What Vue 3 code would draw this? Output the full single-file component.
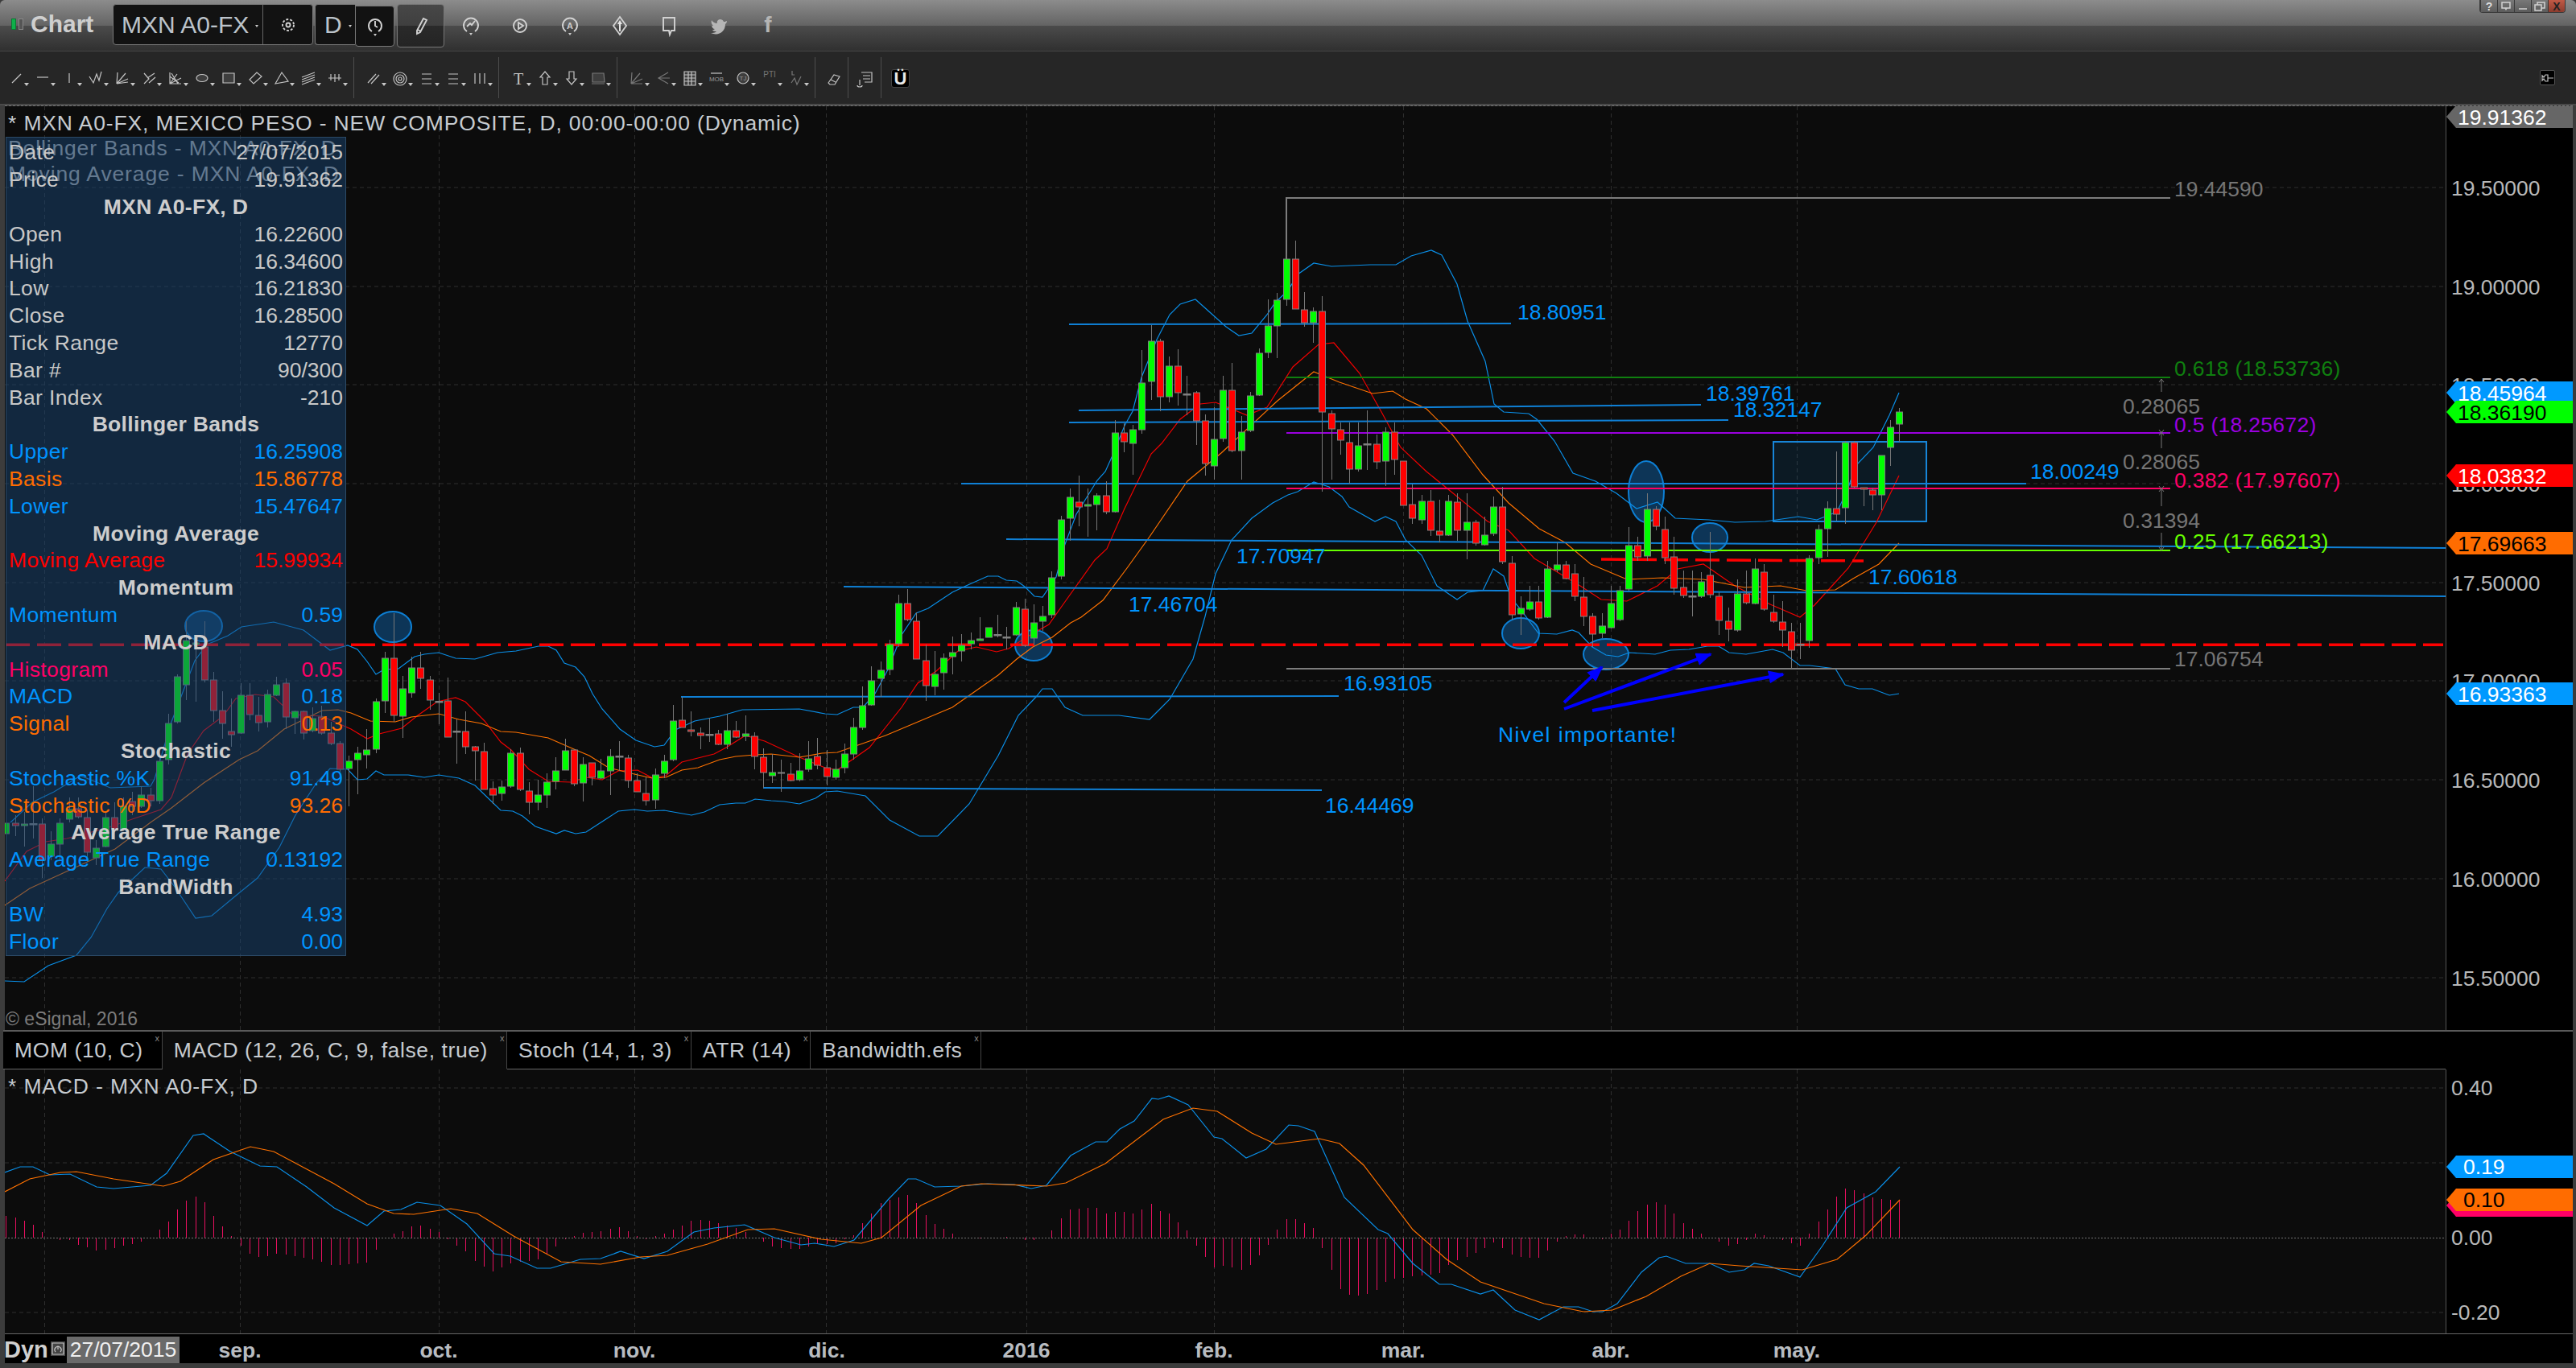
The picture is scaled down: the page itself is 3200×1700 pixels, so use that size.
<template>
  <div class="window">
    <!-- barra de titulo -->
    <div class="titlebar">
      <span class="status"><i class="on"></i><i></i></span>
      <span class="app">Chart</span>
      <div class="symbol">
        <span class="big">MXN A0-FX</span><b class="tri"></b>
        <span class="gearcell">
          <svg width="24" height="24" viewBox="0 0 24 24"><circle cx="12" cy="12" r="7" class="st" stroke-width="3" stroke-dasharray="3 2"/><circle cx="12" cy="12" r="2.5" class="st"/></svg>
        </span>
      </div>
      <div class="period"><span class="big">D</span><b class="tri"></b></div>
      <div class="clockbtn">
        <svg width="24" height="28" viewBox="0 0 24 28"><path d="M8 20A8 8 0 1 1 16 20M12 7V13L15 15" class="st"/><path d="M10 23h4l-2 3z" fill="#ccc"/></svg>
      </div>
      <div class="pencil">
        <svg width="24" height="28" viewBox="0 0 24 28"><path d="M7 20 L15 5 L19 7 L11 22 L7 24 Z M8 19 L12 21" class="st"/></svg>
      </div>
      <div class="topicons">
        <span class="ti"><svg width="26" height="28" viewBox="0 0 26 28"><path d="M8 21A9 9 0 1 1 18 21M8 15 L12 11 L14 13 L18 8" class="st"/><path d="M11 23h4l-2 3z" fill="#ccc"/></svg></span>
        <span class="ti"><svg width="26" height="28" viewBox="0 0 26 28"><circle cx="13" cy="14" r="8" class="st"/><path d="M11 10 L17 14 L11 18 Z" class="st"/></svg></span>
        <span class="ti"><svg width="26" height="28" viewBox="0 0 26 28"><path d="M8 21A9 9 0 1 1 18 21" class="st"/><text x="13" y="18" class="mini">A</text><path d="M11 23h4l-2 3z" fill="#ccc"/></svg></span>
        <span class="ti"><svg width="26" height="28" viewBox="0 0 26 28"><path d="M13 3 L21 14 L13 25 L5 14 Z" class="st"/><path d="M13 7 L16 12 H14 V21 H12 V12 H10 Z" fill="#e6e6e6"/></svg></span>
        <span class="ti"><svg width="26" height="28" viewBox="0 0 26 28"><path d="M6 4 H20 V20 H16 L14 25 L13 20 H6 Z" class="st"/></svg></span>
        <span class="ti"><svg width="26" height="28" viewBox="0 0 26 28"><path d="M23 8 C21 9 20 9 19 9 C18 6 14 5 12 7 C10 9 11 11 11 11 C8 11 5 9 4 7 C3 10 4 12 6 14 C5 14 4 14 4 13 C4 16 6 18 8 18 C7 19 6 19 5 19 C6 21 8 21 10 21 C8 23 5 23 3 23 C12 27 21 22 21 12 C22 11 23 10 23 8 Z" fill="#b5b5b5"/></svg></span>
        <span class="ti fbcell"><svg width="26" height="36" viewBox="0 0 26 36"><text x="13" y="28" class="fb">f</text></svg></span>
      </div>
      <div class="winbtns">
        <span>?</span>
        <span><svg width="14" height="12" viewBox="0 0 14 12"><path d="M2 1H12V8H2Z" class="st2"/><path d="M5 8h4l-2 3z" fill="#ccc"/></svg></span>
        <span><svg width="12" height="12" viewBox="0 0 12 12"><path d="M1 9H11" class="st2"/></svg></span>
        <span><svg width="14" height="12" viewBox="0 0 14 12"><path d="M1 4H9V11H1ZM4 4V1H13V8H9" class="st2"/></svg></span>
        <span class="close">X</span>
      </div>
    </div>

    <!-- barra de desenho -->
    <div class="toolbar">
      <template v-for="(g, gi) in toolGroups" :key="gi">
        <div class="group">
          <svg v-for="(t, i) in g" :key="i" class="tool" width="33" height="30" viewBox="0 0 33 30">
            <path v-if="t.d" :d="t.d" :class="['ts', t.fill ? 'filled' : '', t.dim ? 'dim' : '']"/>
            <text v-if="t.text" x="14" :y="t.ty" :class="t.cl">{{ t.text }}</text>
            <path d="M24 20h6l-3 4z" fill="#c8c8c8"/>
          </svg>
        </div>
        <i class="sep"></i>
      </template>
      <svg class="single eraser" width="26" height="30" viewBox="0 0 26 30"><path d="M5 20 L12 10 L19 12 L13 22 H7 Z M8 16 L14 19" class="ts"/></svg>
      <i class="sep sep-a"></i>
      <svg class="single" width="34" height="30" viewBox="0 0 34 30"><path d="M12 7H25V19H16M14 11H23M14 15H23M10 16V23M7 23a3 2 0 1 0 6 0" class="ts"/></svg>
      <i class="sep sep-b"></i>
      <span class="magnet">Ü</span>
      <span class="pin"><svg width="16" height="12" viewBox="0 0 16 12"><path d="M1 3 L3 5 L5 2 H8 V10 H5 L3 7 L1 9 Z M8 6 H15" class="ts"/></svg></span>
    </div>

    <!-- grafico de precos -->
    <div class="pane">
      <svg class="chart" width="3190" height="1148" viewBox="6 133 3190 1148">
        <rect x="6" y="133" width="3032" height="1148" fill="#0c0c0c"/>
        <rect x="3038" y="133" width="158" height="1148" fill="#000"/>
        <path v-for="y in priceGrid" :key="'h'+y" :d="`M6 ${y}H3038`" class="grid"/>
        <path v-for="x in monthLines" :key="'v'+x" :d="`M${x} 133V1281`" class="grid"/>

        <ellipse v-for="(e, i) in ellipses" :key="'e'+i" :cx="e[0]" :cy="e[1]" :rx="e[2]" :ry="e[3]" fill="rgba(15,105,180,.45)" stroke="#0d7fd4" stroke-width="2"/>
        <rect x="2203" y="550" width="190" height="99" fill="rgba(15,120,200,.13)" stroke="#1785d8" stroke-width="2"/>

        <polyline :points="upper" class="ind" stroke="#0a8fe8"/>
        <polyline :points="lower" class="ind" stroke="#0a8fe8"/>
        <polyline :points="basis" class="ind" stroke="#f00000"/>
        <polyline :points="ema" class="ind" stroke="#ff7200"/>

        <line v-for="(l, i) in trend" :key="'t'+i" :x1="l[0]" :y1="l[1]" :x2="l[2]" :y2="l[3]" stroke="#0f80d6" stroke-width="2"/>
        <line v-for="(l, i) in fib" :key="'f'+i" x1="1598" :y1="l[0]" x2="2696" :y2="l[0]" :stroke="l[1]" stroke-width="2"/>
        <path d="M1598 323V247H2696" fill="none" stroke="#7d7d7d" stroke-width="2"/>
        <path d="M2685 472V488M2685 537V558M2685 607V630M2685 663V685M2682 476l3 -4 3 4M2682 535l3 4 3 -4M2682 542l3 -4 3 4M2682 605l3 4 3 -4M2682 612l3 -4 3 4M2682 681l3 4 3 -4" fill="none" stroke="#777" stroke-width="1"/>

        <line x1="7" y1="802.3" x2="3035" y2="802.3" class="reddash"/>
        <line x1="1989" y1="696" x2="2315" y2="698" class="reddash"/>

        <g v-for="(c, i) in candles" :key="'c'+i">
          <line :x1="c.x" :y1="c.hi" :x2="c.x" :y2="c.lo" stroke="#777"/>
          <rect v-if="c.t === 'd'" :x="c.x - 5" :y="c.top - 1" width="10" height="2.5" fill="#808080"/>
          <rect v-else :x="c.x - 4" :y="c.top" width="8" :height="c.bot - c.top" :fill="c.t === 'g' ? '#00ff00' : '#ff0000'" stroke="#808080"/>
        </g>

        <defs>
          <marker id="head" markerWidth="5" markerHeight="4" refX="4.5" refY="2" orient="auto"><path d="M0 0L5 2L0 4Z" fill="#0000ff"/></marker>
        </defs>
        <line x1="1943" y1="874" x2="1990" y2="830" class="bluearrow"/>
        <line x1="1943" y1="882" x2="2125" y2="814" class="bluearrow"/>
        <line x1="1978" y1="884" x2="2215" y2="839" class="bluearrow"/>

        <text v-for="(l, i) in labels" :key="'l'+i" :x="l[0]" :y="l[1] + 9.5" :fill="l[3]" :text-anchor="l[4] || 'start'" :class="['lbl', l[5]]">{{ l[2] }}</text>
        <text x="10" y="163" fill="#c6cbd0" class="lbl wide">* MXN A0-FX, MEXICO PESO - NEW COMPOSITE, D, 00:00-00:00 (Dynamic)</text>
        <text x="10" y="194" fill="#aaa" class="lbl wide">Bollinger Bands - MXN A0-FX, D</text>
        <text x="10" y="226" fill="#aaa" class="lbl wide">Moving Average - MXN A0-FX, D</text>
        <text x="7" y="1275" fill="#7c7c7c" class="lbl small">© eSignal, 2016</text>

        <path d="M3038.5 133V1281" stroke="#555"/>
        <text v-for="a in priceAxis" :key="a[1]" x="3045" :y="a[0] + 9.5" fill="#b8b8b8" class="lbl">{{ a[1] }}</text>
        <g v-for="f in flags" :key="f[1]">
          <polygon :points="`3039,${f[0]} 3051,${f[0] - 14} 3196,${f[0] - 14} 3196,${f[0] + 14} 3051,${f[0] + 14}`" :fill="f[2]"/>
          <text x="3053" :y="f[0] + 9.5" :fill="f[3]" class="lbl">{{ f[1] }}</text>
        </g>
      </svg>

      <!-- janela de dados -->
      <div class="cursor">
        <div v-for="(r, i) in rows" :key="i" :class="['row', r.h ? 'head' : '']">
          <template v-if="r.h">{{ r.h }}</template>
          <template v-else>
            <span :class="r.c">{{ r.l }}</span><span :class="r.c">{{ r.v }}</span>
          </template>
        </div>
      </div>
    </div>

    <!-- separadores -->
    <div class="tabs">
      <div v-for="t in tabs" :key="t" :class="['tab', t.startsWith('MACD') ? 'active' : '']">{{ t }}<em>x</em></div>
      <div class="tabfill"></div>
      <div class="tabaxis"></div>
    </div>

    <!-- painel MACD -->
    <svg class="macd" width="3190" height="328" viewBox="6 1331 3190 328">
      <rect x="6" y="1331" width="3032" height="328" fill="#0c0c0c"/>
      <rect x="3038" y="1331" width="158" height="328" fill="#000"/>
      <path v-for="y in [1354, 1447, 1633]" :key="y" :d="`M6 ${y}H3038`" class="grid"/>
      <path v-for="x in monthLines" :key="'m'+x" :d="`M${x} 1331V1659`" class="grid"/>
      <line v-for="(h, i) in hist" :key="'b'+i" :x1="h.x" y1="1540" :x2="h.x" :y2="h.y" stroke="#e8105f"/>
      <path d="M6 1540.5H3038" stroke="#707070" stroke-dasharray="2 2" fill="none"/>
      <polyline :points="macdLine" class="ind" stroke="#0a8fe8"/>
      <polyline :points="signalLine" class="ind" stroke="#ff7200"/>
      <text x="10" y="1361" fill="#c6cbd0" class="lbl wide">* MACD - MXN A0-FX, D</text>
      <path d="M3038.5 1331V1659" stroke="#555"/>
      <text x="3045" y="1363" fill="#b8b8b8" class="lbl">0.40</text>
      <text x="3045" y="1549" fill="#b8b8b8" class="lbl">0.00</text>
      <text x="3045" y="1642" fill="#b8b8b8" class="lbl">-0.20</text>
      <polygon points="3039,1500 3051,1486 3196,1486 3196,1514 3051,1514" fill="#ff0066"/>
      <polygon points="3039,1452 3051,1438 3196,1438 3196,1466 3051,1466" fill="#0099ff"/>
      <polygon points="3039,1493 3051,1479 3196,1479 3196,1507 3051,1507" fill="#ff6c00"/>
      <text x="3060" y="1461" fill="#fff" class="lbl">0.19</text>
      <text x="3060" y="1502" fill="#000" class="lbl">0.10</text>
    </svg>

    <!-- eixo de datas -->
    <div class="xaxis">
      <span class="dyn">Dyn</span>
      <span class="dynbox"><svg width="16" height="16" viewBox="0 0 16 16"><path d="M1 1H15V15H1ZM5 12A4 4 0 1 1 11 12M8 5V9" class="ts"/></svg></span>
      <span class="datebox">27/07/2015</span>
      <span v-for="m in months" :key="m.t" class="month" :style="{ left: m.x + 'px' }">{{ m.t }}</span>
    </div>
  </div>
</template>

<script setup>
const rawCandles = `g 1024 1037 1020 1038,r 1024 1027 1014 1040,g 1025 1027 1010 1053,d 1025 1025 978 1043,r 1025 1070 1018 1092,
g 1050 1065 1034 1070,g 1024 1050 1018 1070,g 1007 1019 992 1023,r 1006 1016 992 1018,r 1017 1060 1007 1072,
g 1055 1067 1045 1076,g 1017 1053 1010 1054,r 1017 1032 998 1045,g 1003 1032 992 1034,r 997 1003 985 1014,
g 989 1003 978 1005,r 989 996 980 1003,g 947 996 942 1000,g 900 945 888 951,g 842 898 839 900,
g 797 852 773 871,g 800 802 790 873,r 805 846 773 849,r 846 884 836 898,r 884 900 860 919,
r 910 914 869 929,g 865 912 850 913,r 865 889 850 896,r 890 899 867 910,g 864 898 858 905,
g 852 865 842 866,r 850 892 844 907,g 885 893 884 913,r 885 912 884 920,g 894 909 880 911,
r 892 912 878 914,r 912 925 898 927,r 925 957 922 960,g 947 956 940 1003,g 937 945 929 988,
g 933 939 907 956,g 873 932 869 937,g 819 872 811 887,r 819 890 763 898,g 857 891 841 918,
g 831 862 817 868,r 831 844 811 857,r 846 871 841 883,d 873 873 862 901,r 872 917 843 917,
d 910 910 895 950,r 910 929 885 938,r 929 934 928 971,r 935 982 924 982,r 981 989 972 1000,
g 979 987 971 996,g 937 978 932 980,r 937 982 930 984,r 984 998 973 1013,g 989 998 970 1008,
g 973 989 962 1005,g 959 972 942 982,g 934 958 919 958,r 933 975 932 978,g 951 974 942 997,
r 949 967 949 977,g 959 968 944 969,g 941 959 932 989,d 941 941 922 959,r 943 971 939 980,
r 971 985 962 985,r 987 996 967 1002,g 964 995 956 1006,g 947 962 939 968,g 897 945 877 947,
r 896 905 867 905,r 908 910 885 916,r 912 915 905 932,d 914 914 893 923,r 913 926 908 927,
g 909 926 888 932,r 909 917 897 918,g 913 916 890 922,r 916 941 911 957,r 942 961 931 980,
g 961 965 938 974,r 961 962 945 985,r 963 971 949 972,g 959 970 937 972,g 944 957 922 960,
r 941 952 918 957,r 955 966 933 977,g 957 967 945 970,g 938 955 925 962,g 905 938 893 945,
g 878 905 854 908,g 847 877 829 878,g 834 844 823 867,g 802 833 796 840,g 751 801 740 805,
r 751 771 733 773,r 773 820 762 820,r 822 853 802 872,g 839 854 810 865,g 819 837 813 858,
g 812 817 792 839,g 803 810 789 823,g 797 801 787 808,g 795 797 768 797,g 781 793 781 793,
d 790 790 765 793,d 793 793 780 808,g 756 790 749 791,r 758 803 745 805,g 775 794 752 803,
g 767 773 754 785,g 719 765 711 769,g 647 717 642 721,g 619 645 608 673,r 625 631 592 655,
g 628 630 608 668,g 617 628 614 660,r 617 637 599 640,g 539 637 523 638,r 539 550 527 563,
g 535 552 529 591,g 477 535 436 540,g 425 475 405 498,r 425 494 422 512,g 456 494 444 501,
r 456 489 435 505,d 491 491 468 517,r 489 524 487 554,r 524 577 516 592,g 547 580 507 597,
g 486 546 468 550,r 486 561 452 563,g 538 561 518 597,g 493 536 488 538,g 440 492 434 493,
g 406 439 373 446,g 374 406 365 446,g 323 373 316 381,r 323 385 300 385,r 386 402 364 407,
g 388 402 383 427,r 388 513 369 612,r 515 534 511 597,r 535 548 526 566,r 551 584 526 602,
g 555 584 526 587,d 553 553 511 585,r 553 575 541 584,g 538 574 532 605,r 538 572 526 591,
r 574 629 574 629,r 628 645 603 652,g 624 647 616 652,r 624 660 610 667,r 661 666 622 675,
g 624 666 616 667,r 625 660 614 673,g 650 660 614 696,r 650 676 647 679,g 666 678 643 679,
g 631 664 618 667,r 631 699 606 702,r 701 765 692 771,g 757 764 742 790,g 749 758 729 760,
r 749 769 729 771,g 708 768 698 769,g 703 709 675 712,r 703 720 698 721,r 714 742 702 748,
r 743 767 718 779,r 767 789 763 805,g 779 788 763 794,g 751 781 729 782,g 735 771 729 773,
g 679 733 656 735,r 679 693 668 698,g 634 692 614 698,r 634 655 630 660,r 659 694 643 702,
r 693 732 668 740,r 731 741 710 744,d 742 742 710 767,g 724 742 712 744,r 716 740 662 744,
r 742 772 737 790,r 773 783 756 798,g 739 784 721 786,r 739 750 710 752,g 708 751 695 752,
r 712 758 702 760,r 762 773 740 775,r 774 784 748 805,r 786 809 775 832,d 802 802 775 820,
g 695 797 691 806,g 659 694 653 702,g 633 658 624 693,r 633 640 562 648,g 551 632 549 652,
r 551 606 549 607,r 607 609 607 630,r 610 616 607 635,g 567 616 567 635,g 532 557 523 580,
g 513 528 508 550`

const barX = (i) => Math.round(7.3 + 11.2 * i) + 0.5

const candles = rawCandles.split(',').map((s, i) => {
  const p = s.trim().split(' ')
  return { t: p[0], x: barX(i), top: +p[1], bot: +p[2], hi: +p[3], lo: +p[4] }
})

const toPoints = (a) => a.map((p) => p.join(',')).join(' ')

const upperPts = [[13,1023],[40,998],[67,985],[100,965],[137,980],[187,978],[192,969],[213,898],[242,822],[257,802],[283,791],[300,780],[340,774],[377,784],[410,809],[432,803],[444,808],[456,823],[467,839],[477,833],[495,832],[515,817],[527,814],[545,812],[566,819],[590,820],[618,812],[641,810],[669,804],[681,804],[691,809],[701,825],[715,830],[726,842],[736,863],[748,882],[770,907],[790,921],[813,929],[825,927],[839,908],[863,897],[894,891],[922,883],[993,882],[1025,888],[1040,889],[1060,880],[1072,880],[1087,863],[1103,833],[1120,790],[1138,763],[1153,757],[1183,737],[1200,729],[1227,717],[1240,717],[1250,722],[1263,723],[1273,730],[1285,742],[1295,743],[1312,718],[1322,680],[1337,640],[1363,598],[1373,587],[1382,567],[1397,530],[1407,512],[1418,470],[1437,423],[1453,392],[1466,379],[1485,373],[1504,390],[1523,407],[1539,418],[1555,415],[1574,392],[1584,377],[1600,362],[1612,342],[1632,328],[1654,332],[1702,330],[1734,330],[1753,319],[1778,312],[1791,318],[1810,354],[1823,400],[1845,450],[1856,503],[1868,513],[1899,515],[1909,522],[1931,549],[1954,589],[1982,599],[2008,614],[2033,633],[2059,625],[2081,645],[2123,647],[2155,650],[2193,649],[2234,643],[2257,647],[2282,637],[2295,610],[2305,580],[2327,557],[2347,517],[2359,489]]
const lowerPts = [[6,1220],[30,1221],[60,1201],[95,1188],[113,1166],[133,1130],[147,1110],[180,1079],[200,1081],[217,1103],[243,1142],[263,1139],[293,1114],[320,1092],[347,1054],[367,1014],[393,974],[410,956],[432,957],[444,970],[456,969],[467,959],[477,964],[507,964],[527,967],[545,964],[570,968],[590,977],[622,1008],[637,1009],[649,1015],[665,1028],[691,1037],[701,1033],[715,1037],[728,1035],[748,1022],[768,1009],[788,1007],[804,1009],[825,1008],[859,1014],[875,1010],[894,1001],[914,999],[926,999],[938,994],[958,996],[974,997],[993,1000],[1013,993],[1025,985],[1040,984],[1075,990],[1105,1020],[1142,1040],[1165,1040],[1204,1000],[1240,940],[1265,890],[1287,867],[1295,857],[1307,857],[1323,880],[1345,890],[1390,890],[1428,895],[1443,880],[1453,870],[1482,820],[1497,767],[1510,714],[1530,672],[1555,645],[1581,626],[1600,616],[1612,612],[1632,600],[1651,606],[1667,618],[1676,631],[1708,649],[1721,643],[1734,649],[1746,672],[1766,691],[1785,729],[1810,746],[1823,737],[1842,735],[1855,708],[1868,717],[1877,744],[1888,757],[1911,788],[1934,789],[1953,784],[1961,787],[1978,805],[1995,815],[2010,817],[2024,812],[2056,814],[2075,809],[2098,808],[2121,804],[2135,804],[2148,812],[2169,814],[2202,808],[2215,812],[2236,828],[2248,828],[2280,832],[2292,852],[2309,857],[2326,857],[2347,865],[2359,863]]
const basisPts = [[6,1096],[33,1059],[57,1047],[83,1043],[133,1030],[167,1018],[200,1007],[213,992],[233,938],[253,909],[277,891],[293,869],[317,864],[340,867],[363,889],[400,891],[436,907],[456,919],[471,913],[499,906],[519,890],[543,873],[566,868],[578,873],[602,897],[622,923],[635,933],[657,957],[681,972],[709,973],[728,967],[748,970],[768,959],[792,958],[811,968],[827,965],[847,948],[887,938],[902,930],[926,915],[950,922],[993,942],[1025,955],[1040,958],[1080,930],[1120,880],[1140,850],[1163,835],[1190,810],[1213,805],[1238,811],[1253,807],[1280,790],[1303,777],[1320,753],[1360,697],[1375,683],[1397,633],[1430,565],[1443,552],[1466,522],[1491,503],[1510,501],[1549,517],[1574,507],[1606,457],[1638,429],[1657,427],[1689,465],[1715,511],[1740,557],[1772,587],[1810,618],[1848,649],[1874,660],[1906,695],[1938,714],[1963,729],[1989,746],[2021,748],[2059,729],[2084,708],[2116,702],[2155,729],[2199,752],[2236,768],[2254,753],[2296,707],[2331,650],[2359,592]]
const emaPts = [[6,1126],[37,1105],[100,1076],[143,1056],[187,1023],[213,1005],[253,974],[297,945],[320,934],[353,907],[400,884],[420,883],[436,887],[460,897],[491,898],[511,892],[545,888],[570,895],[598,900],[622,910],[641,911],[681,918],[713,932],[732,940],[756,955],[788,963],[810,968],[827,967],[847,958],[867,955],[894,945],[914,941],[938,939],[958,938],[993,942],[1021,937],[1040,936],[1100,915],[1183,880],[1240,840],[1263,820],[1283,805],[1307,793],[1330,775],[1343,768],[1370,747],[1400,707],[1428,668],[1475,599],[1517,564],[1587,499],[1632,463],[1664,476],[1705,490],[1730,487],[1746,497],[1772,509],[1804,541],[1842,591],[1874,626],[1912,658],[1944,675],[1976,702],[2021,721],[2065,719],[2116,721],[2167,731],[2212,729],[2244,735],[2280,734],[2302,720],[2334,702],[2359,676]]
const macdPts = [[6,1459],[25,1452],[41,1452],[62,1462],[87,1461],[120,1477],[141,1479],[187,1475],[207,1460],[240,1413],[253,1411],[286,1433],[323,1451],[344,1452],[381,1477],[415,1503],[456,1525],[477,1507],[498,1505],[518,1496],[547,1500],[580,1523],[614,1560],[634,1563],[667,1578],[684,1578],[721,1567],[746,1566],[771,1557],[800,1566],[829,1557],[862,1533],[887,1528],[925,1524],[962,1540],[995,1549],[1012,1547],[1036,1551],[1061,1543],[1103,1493],[1128,1467],[1138,1467],[1161,1477],[1194,1476],[1227,1473],[1260,1474],[1281,1479],[1300,1475],[1330,1438],[1361,1421],[1375,1421],[1391,1405],[1409,1395],[1431,1367],[1439,1368],[1452,1364],[1476,1375],[1508,1415],[1518,1417],[1548,1441],[1573,1430],[1601,1400],[1613,1401],[1633,1408],[1670,1490],[1712,1530],[1724,1535],[1755,1572],[1788,1598],[1803,1598],[1839,1610],[1855,1605],[1882,1630],[1912,1642],[1942,1626],[1961,1626],[1979,1632],[1991,1632],[2009,1622],[2039,1583],[2061,1565],[2070,1563],[2094,1572],[2124,1572],[2148,1583],[2167,1580],[2179,1572],[2197,1575],[2236,1589],[2264,1550],[2294,1503],[2330,1483],[2360,1452]]
const signalPts = [[6,1483],[37,1467],[75,1459],[95,1458],[141,1467],[203,1476],[224,1470],[265,1443],[311,1427],[340,1433],[415,1473],[456,1498],[489,1510],[514,1511],[560,1504],[593,1510],[638,1538],[697,1570],[746,1573],[796,1564],[829,1562],[879,1548],[929,1530],[962,1529],[1020,1542],[1070,1547],[1095,1540],[1144,1500],[1194,1476],[1219,1473],[1300,1476],[1324,1472],[1373,1448],[1445,1393],[1482,1379],[1512,1383],[1555,1410],[1585,1424],[1639,1417],[1664,1423],[1694,1450],[1755,1530],[1797,1567],[1839,1595],[1918,1622],[1967,1632],[2003,1630],[2045,1613],[2088,1588],[2124,1572],[2161,1575],[2239,1580],[2282,1567],[2318,1537],[2360,1493]]

const upper = toPoints(upperPts)
const lower = toPoints(lowerPts)
const basis = toPoints(basisPts)
const ema = toPoints(emaPts)
const macdLine = toPoints(macdPts)
const signalLine = toPoints(signalPts)

// valor de uma serie em x, por interpolacao
function valueAt(pts, x) {
  for (let i = 1; i < pts.length; i++) {
    if (x <= pts[i][0]) {
      const [x0, y0] = pts[i - 1]
      const [x1, y1] = pts[i]
      return y0 + ((y1 - y0) * (x - x0)) / (x1 - x0)
    }
  }
  return pts[pts.length - 1][1]
}

const hist = candles.map((c) => ({
  x: c.x,
  y: Math.round(1540 + (valueAt(macdPts, c.x) - valueAt(signalPts, c.x)) * 1.15)
}))

const priceGrid = [234, 357, 479, 602, 725, 847, 970, 1093, 1216]
const monthLines = [55.5, 298.5, 545.5, 788.5, 1026.5, 1275.5, 1508.5, 1743.5, 2001.5, 2232.5]

const ellipses = [[253, 779, 23, 19], [488, 780, 23, 19], [1284, 803, 23, 19], [2045, 612, 22, 38], [2124, 669, 22, 18], [1889, 788, 23, 19], [1995, 814, 28, 19]]

const trend = [
  [1328, 404, 1877, 403],
  [1340, 511, 2113, 504],
  [1328, 526, 2147, 523],
  [1194, 602, 2517, 602],
  [1250, 671, 3038, 682],
  [1048, 730, 3038, 742],
  [846, 867, 1663, 866],
  [948, 980, 1642, 983]
]

const fib = [[470, '#0f7f0f'], [539, '#9b00e0'], [608, '#ff0066'], [685, '#66ff00'], [832, '#7d7d7d']]

const labels = [
  [1885, 388, '18.80951', '#0094ff'],
  [2119, 489, '18.39761', '#0094ff'],
  [2153, 509, '18.32147', '#0094ff'],
  [2522, 586, '18.00249', '#0094ff'],
  [1536, 691, '17.70947', '#0094ff'],
  [1402, 751, '17.46704', '#0094ff'],
  [2321, 717, '17.60618', '#0094ff'],
  [1669, 849, '16.93105', '#0094ff'],
  [1646, 1001, '16.44469', '#0094ff'],
  [1861, 913, 'Nivel importante!', '#0094ff', 'start', 'nivel'],
  [2701, 235, '19.44590', '#757575'],
  [2701, 458, '0.618 (18.53736)', '#0f7f0f', 'start', 'fibl'],
  [2701, 528, '0.5 (18.25672)', '#9b00e0', 'start', 'fibl'],
  [2701, 597, '0.382 (17.97607)', '#ff0066', 'start', 'fibl'],
  [2701, 673, '0.25 (17.66213)', '#66ff00', 'start', 'fibl'],
  [2701, 819, '17.06754', '#757575'],
  [2685, 505, '0.28065', '#757575', 'middle'],
  [2685, 574, '0.28065', '#757575', 'middle'],
  [2685, 647, '0.31394', '#757575', 'middle']
]

const priceAxis = [[234, '19.50000'], [357, '19.00000'], [479, '18.50000'], [602, '18.00000'], [725, '17.50000'], [847, '17.00000'], [970, '16.50000'], [1093, '16.00000'], [1216, '15.50000']]

const flags = [
  [146, '19.91362', '#666666', '#fff'],
  [489, '18.45964', '#0099ff', '#fff'],
  [513, '18.36190', '#00ff00', '#000'],
  [592, '18.03832', '#ff0000', '#fff'],
  [676, '17.69663', '#ff6c00', '#000'],
  [863, '16.93363', '#0099ff', '#fff']
]

const rows = [
  { l: 'Date', v: '27/07/2015' },
  { l: 'Price', v: '19.91362' },
  { h: 'MXN A0-FX, D' },
  { l: 'Open', v: '16.22600' },
  { l: 'High', v: '16.34600' },
  { l: 'Low', v: '16.21830' },
  { l: 'Close', v: '16.28500' },
  { l: 'Tick Range', v: '12770' },
  { l: 'Bar #', v: '90/300' },
  { l: 'Bar Index', v: '-210' },
  { h: 'Bollinger Bands' },
  { l: 'Upper', v: '16.25908', c: 'blue' },
  { l: 'Basis', v: '15.86778', c: 'orange' },
  { l: 'Lower', v: '15.47647', c: 'blue' },
  { h: 'Moving Average' },
  { l: 'Moving Average', v: '15.99934', c: 'red' },
  { h: 'Momentum' },
  { l: 'Momentum', v: '0.59', c: 'blue' },
  { h: 'MACD' },
  { l: 'Histogram', v: '0.05', c: 'pink' },
  { l: 'MACD', v: '0.18', c: 'blue' },
  { l: 'Signal', v: '0.13', c: 'orange' },
  { h: 'Stochastic' },
  { l: 'Stochastic %K', v: '91.49', c: 'blue' },
  { l: 'Stochastic %D', v: '93.26', c: 'orange' },
  { h: 'Average True Range' },
  { l: 'Average True Range', v: '0.13192', c: 'blue' },
  { h: 'BandWidth' },
  { l: 'BW', v: '4.93', c: 'blue' },
  { l: 'Floor', v: '0.00', c: 'blue' }
]

const tabs = ['MOM (10, C)', 'MACD (12, 26, C, 9, false, true)', 'Stoch (14, 1, 3)', 'ATR (14)', 'Bandwidth.efs']

const months = [
  { t: 'sep.', x: 298 }, { t: 'oct.', x: 545 }, { t: 'nov.', x: 788 }, { t: 'dic.', x: 1027 }, { t: '2016', x: 1275 },
  { t: 'feb.', x: 1508 }, { t: 'mar.', x: 1743 }, { t: 'abr.', x: 2001 }, { t: 'may.', x: 2232 }
]

const toolGroups = [
  [
    { d: 'M9 20L20 9' },
    { d: 'M7 13H21' },
    { d: 'M14 8V20' },
    { d: 'M6 12L11 20L15 9L18 17L21 6' },
    { d: 'M7 21L8 7M7 21L18 8M7 21L21 15M7 21L21 19' },
    { d: 'M8 8L14 15L8 21M12 14L21 8M14 20L22 13' },
    { d: 'M7 7V21H21M7 21L21 14M7 21L16 9M7 12L18 20M9 8L17 21' },
    { d: 'M7 14a7 4.5 0 1 0 14 0a7 4.5 0 1 0 -14 0Z', fill: true },
    { d: 'M7 8H21V20H7Z', fill: true },
    { d: 'M7 16L16 7L22 12L12 21Z' },
    { d: 'M6 21L14 7L22 18Z' },
    { d: 'M6 13L22 7M6 16L22 10M6 19L22 13M6 22L22 16' },
    { d: 'M6 14H22M9 9V17M14 9V19M19 9V17' }
  ],
  [
    { d: 'M7 20L17 9M11 21L21 10' },
    { d: 'M6 15a8 8 0 1 0 16 0a8 8 0 1 0 -16 0M9 15a5 5 0 1 0 10 0a5 5 0 1 0 -10 0M12 15a2 2 0 1 0 4 0a2 2 0 1 0 -4 0' },
    { d: 'M8 9H20M8 15H20M8 21H20' },
    { d: 'M8 9H20M8 15H20M8 21H20' },
    { d: 'M8 8V21M14 8V21M20 8V21' }
  ],
  [
    { text: 'T', ty: 22, cl: 'serif' },
    { d: 'M14 6L20 13H17V22H11V13H8Z' },
    { d: 'M11 6H17V15H20L14 22L8 15H11Z' },
    { d: 'M7 8H21L22 19H7ZM6 21H22', fill: true, dim: true }
  ],
  [
    { d: 'M7 21L8 7M7 21L18 8M7 21L21 15M7 21H21', dim: true },
    { d: 'M20 7L8 14L20 21M8 14H22', dim: true },
    { d: 'M7 6H21V23H7ZM7 10H21M7 14H21M7 18H21M12 6V23M16 6V23', fill: true },
    { d: 'M7 8H21', text: 'MOB', ty: 18, cl: 'tiny' },
    { d: 'M7 14a7 7 0 1 0 14 0a7 7 0 1 0 -14 0Z', fill: true, text: 'TJ', ty: 17, cl: 'tiny' },
    { text: 'PTI', ty: 13, cl: 'tiny2' },
    { d: 'M9 5V10H12M8 20L12 14L15 22L20 12', dim: true }
  ]
]
</script>

<style scoped>
.window {
  width: 3200px;
  height: 1700px;
  background: #3c3c3c;
  display: flex;
  flex-direction: column;
  font-family: "Liberation Sans", Arial, sans-serif;
  overflow: hidden;
  color: #c8c8c8;
}

/* barra de titulo */
.titlebar {
  height: 63px;
  display: flex;
  align-items: flex-start;
  padding-left: 14px;
  box-sizing: border-box;
  border-radius: 6px 6px 0 0;
  background: linear-gradient(to bottom, #8c8c8c 0, #636363 32px, #4b4b4b 32px, #303030 63px);
}
.status {
  display: flex;
  gap: 3px;
  margin-top: 23px;
  width: 24px;
}
.status i {
  width: 6px;
  height: 14px;
  background: #555;
  border: 1px solid #888;
  box-sizing: border-box;
}
.status .on {
  background: #0fb04a;
  border-color: #0a7a33;
}
.app {
  font-size: 30px;
  font-weight: 700;
  line-height: 60px;
  color: #cfcfcf;
  width: 102px;
}
.symbol,
.period {
  display: flex;
  align-items: center;
  height: 51px;
  margin-top: 5px;
  background: #121212;
  border: 1px solid #787878;
  border-radius: 4px;
  box-sizing: border-box;
}
.symbol {
  width: 249px;
  padding-left: 10px;
}
.period {
  width: 50px;
  margin-left: 2px;
  padding-left: 11px;
  border-right: 0;
  border-radius: 4px 0 0 4px;
}
.big {
  font-size: 30px;
  color: #bcc3ca;
}
.tri {
  width: 0;
  height: 0;
  margin-left: 8px;
  margin-top: 4px;
  border-left: 2px solid transparent;
  border-right: 2px solid transparent;
  border-top: 3px solid #ccc;
}
.gearcell {
  margin-left: 5px;
  height: 100%;
  flex: 1;
  display: flex;
  align-items: center;
  justify-content: center;
  border-left: 1px solid #666;
}
.clockbtn {
  width: 49px;
  height: 51px;
  margin-top: 7px;
  background: #121212;
  border: 1px solid #787878;
  border-radius: 0 4px 4px 4px;
  box-sizing: border-box;
  display: flex;
  align-items: center;
  justify-content: center;
}
.pencil {
  width: 59px;
  height: 54px;
  margin-top: 5px;
  margin-left: 3px;
  border: 1px solid #777;
  border-radius: 4px;
  box-sizing: border-box;
  background: linear-gradient(to bottom, #474747 0, #3f3f3f 50%, #2a2a2a 50%, #242424 100%);
  display: flex;
  align-items: center;
  justify-content: center;
}
.topicons {
  display: flex;
  margin-left: 2px;
  margin-top: 18px;
}
.ti {
  width: 61.6px;
  height: 28px;
  display: flex;
  justify-content: center;
}
.fbcell svg {
  flex: none;
  margin-top: -6px;
}
.winbtns {
  margin-left: auto;
  margin-right: 13px;
  display: flex;
  height: 15px;
  border: 1px solid #3a3a3a;
  border-top: 0;
  border-radius: 0 0 4px 4px;
  overflow: hidden;
}
.winbtns span {
  width: 20px;
  display: flex;
  align-items: center;
  justify-content: center;
  font-size: 14px;
  font-weight: 700;
  color: #ddd;
  background: linear-gradient(to bottom, #787878, #5c5c5c);
  border-left: 1px solid #3a3a3a;
}
.winbtns .close {
  background: linear-gradient(to bottom, #c05a46, #8c3c2e);
  color: #222;
}
.st {
  fill: none;
  stroke: #d2d2d2;
  stroke-width: 1.9;
}
.st2 {
  fill: none;
  stroke: #d2d2d2;
  stroke-width: 1.5;
}
.ts {
  fill: none;
  stroke: #c4c4c4;
  stroke-width: 1.2;
}
.ts.filled {
  fill: #3e3e3e;
}
.ts.dim {
  stroke: #777;
}
.mini {
  font-size: 11px;
  font-weight: 700;
  fill: #ccc;
  text-anchor: middle;
}
.fb {
  font-size: 28px;
  font-weight: 700;
  fill: #b5b5b5;
  text-anchor: middle;
}

/* barra de desenho */
.toolbar {
  height: 68px;
  box-sizing: border-box;
  display: flex;
  align-items: flex-start;
  padding: 19px 0 0 6px;
  background: #262626;
  border-top: 1px solid #444;
  border-bottom: 2px solid #4a4a4a;
}
.group {
  display: flex;
}
.tool {
  flex: none;
}
.sep {
  width: 1px;
  height: 51px;
  margin: -12px 10px 0 4px;
  background: #4d4d4d;
}
.single {
  flex: none;
}
.eraser {
  margin-left: 1px;
}
.sep.sep-a {
  margin-left: 3px;
  margin-right: 4px;
}
.sep.sep-b {
  margin-left: 2px;
  margin-right: 10px;
}
.tiny {
  font-size: 8px;
  fill: #999;
  text-anchor: middle;
}
.tiny2 {
  font-size: 10px;
  fill: #777;
  text-anchor: middle;
}
.serif {
  font-family: "Liberation Serif", serif;
  font-size: 20px;
  fill: #c4c4c4;
  text-anchor: middle;
}
.magnet {
  width: 23px;
  height: 23px;
  margin-top: 3px;
  margin-left: 2px;
  background: #000;
  border: 1px solid #444;
  border-radius: 3px;
  font-size: 22px;
  font-weight: 700;
  line-height: 22px;
  text-align: center;
  color: #e8e8e8;
  box-sizing: border-box;
}
.pin {
  margin-left: auto;
  margin-right: 26px;
  margin-top: 4px;
  width: 19px;
  height: 19px;
  background: #000;
  border: 1px solid #555;
  border-radius: 2px;
  box-sizing: border-box;
  display: flex;
  align-items: center;
  justify-content: center;
}

/* grafico */
.pane {
  position: relative;
  margin-left: 6px;
  margin-right: 4px;
  border-top: 1px dashed #777;
  height: 1148px;
}
.chart,
.macd {
  display: block;
}
.macd {
  margin-left: 6px;
}
.grid {
  fill: none;
  stroke: #2e2e2e;
  stroke-dasharray: 5 4;
}
.ind {
  fill: none;
  stroke-width: 1.2;
}
.reddash {
  stroke: #ff0000;
  stroke-width: 3.5;
  stroke-dasharray: 30 9;
}
.bluearrow {
  stroke: #0000ff;
  stroke-width: 4;
  marker-end: url(#head);
}
.lbl {
  font-family: "Liberation Sans", Arial, sans-serif;
  font-size: 26.5px;
}
.lbl.wide {
  letter-spacing: 0.86px;
}
.lbl.nivel {
  letter-spacing: 1.4px;
}
.lbl.fibl {
  letter-spacing: 0.3px;
}
.lbl.small {
  font-size: 23px;
}

/* janela de dados */
.cursor {
  position: absolute;
  left: 1px;
  top: 38px;
  width: 423px;
  height: 1018px;
  box-sizing: border-box;
  padding: 2px 3px 0;
  background: rgba(24, 70, 117, 0.486);
  border: 1px solid #2c4a66;
  display: flex;
  flex-direction: column;
}
.row {
  flex: 1;
  display: flex;
  justify-content: space-between;
  align-items: center;
  font-size: 26.5px;
  white-space: nowrap;
  color: #c8c8c8;
}
.row span:first-child {
  letter-spacing: 0.35px;
}
.row.head {
  justify-content: center;
  font-weight: 700;
  color: #cdcdcd;
  letter-spacing: 0.3px;
}
.row .blue {
  color: #0094ff;
}
.row .orange {
  color: #ff6c00;
}
.row .red {
  color: #ff0000;
}
.row .pink {
  color: #ff0066;
}

/* separadores */
.tabs {
  display: flex;
  margin-left: 4px;
  margin-right: 4px;
  border-top: 2px solid #5a5a5a;
  background: #000;
  height: 47px;
}
.tab {
  position: relative;
  padding: 0 23px 0 14px;
  line-height: 46px;
  font-size: 26.5px;
  letter-spacing: 0.6px;
  white-space: nowrap;
  color: #c6cbd0;
  background: #000;
  border-right: 1px solid #444;
  border-bottom: 1px solid #666;
}
.tab.active {
  background: #0c0c0c;
  border-bottom-color: #0c0c0c;
}
.tab em {
  position: absolute;
  top: 2px;
  right: 2px;
  font-size: 11px;
  font-style: normal;
  line-height: 12px;
  color: #888;
}
.tabfill {
  flex: 1;
  border-bottom: 1px solid #666;
}
.tabaxis {
  width: 158px;
}

/* eixo de datas */
.xaxis {
  position: relative;
  height: 36px;
  margin-left: 6px;
  margin-right: 4px;
  display: flex;
  align-items: flex-end;
  background: #000;
  border-top: 1px solid #666;
}
.dyn {
  font-size: 29px;
  font-weight: 700;
  line-height: 34px;
  color: #cfcfcf;
  margin-left: -1px;
  width: 58px;
}
.dynbox {
  width: 18px;
  height: 18px;
  margin-bottom: 9px;
  display: flex;
  align-items: center;
  justify-content: center;
  background: #444;
}
.datebox {
  margin-left: 2px;
  width: 140px;
  height: 33px;
  background: #6a6a6a;
  color: #f0f0f0;
  font-size: 26.5px;
  line-height: 33px;
  text-align: center;
}
.month {
  position: absolute;
  top: 4px;
  margin-left: -6px;
  transform: translateX(-50%);
  font-size: 26.5px;
  font-weight: 700;
  line-height: 33px;
  color: #b8bcc0;
}
</style>

<style>
html,
body {
  margin: 0;
  background: #000;
}
</style>
